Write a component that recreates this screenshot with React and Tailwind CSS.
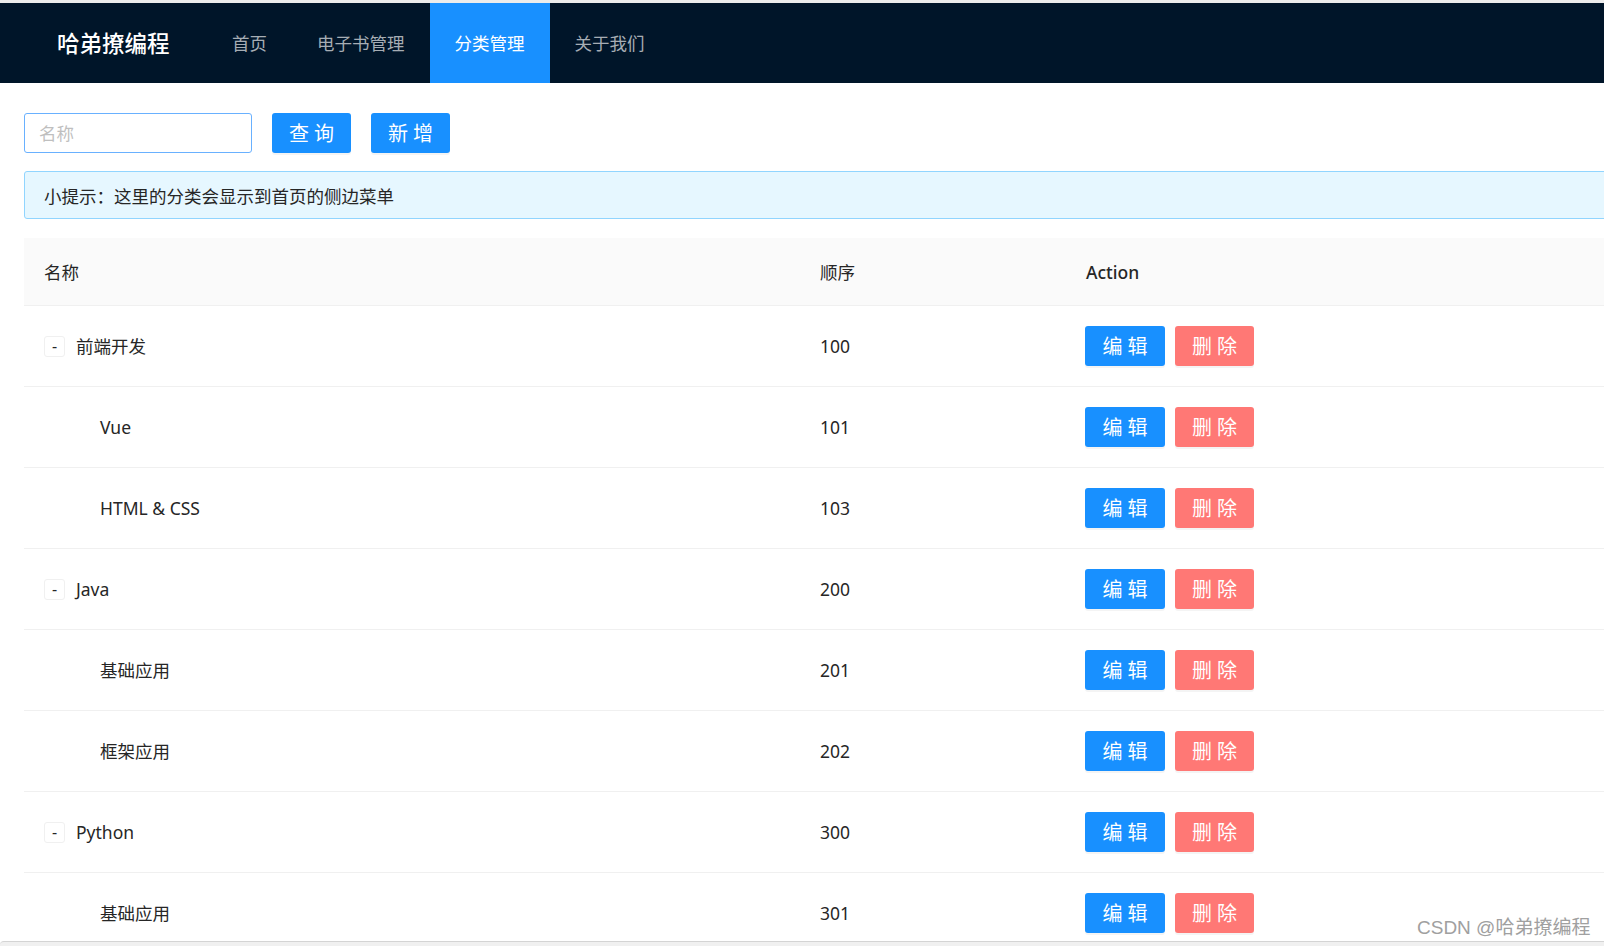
import React from "react";

const navItems = [
  { label: "首页" },
  { label: "电子书管理" },
  { label: "分类管理", active: true },
  { label: "关于我们" },
];

const rows = [
  { name: "前端开发", order: "100", parent: true },
  { name: "Vue", order: "101" },
  { name: "HTML & CSS", order: "103" },
  { name: "Java", order: "200", parent: true },
  { name: "基础应用", order: "201" },
  { name: "框架应用", order: "202" },
  { name: "Python", order: "300", parent: true },
  { name: "基础应用", order: "301" },
];

function TwoChar({ text }) {
  return (
    <span className="flex items-center justify-center gap-[5px] pt-[1px]">
      <span>{text[0]}</span>
      <span>{text[1]}</span>
    </span>
  );
}

export default function App() {
  return (
    <div
      className="w-[1604px] h-[946px] overflow-hidden bg-white flex flex-col relative text-[#262626]"
      style={{ fontFamily: '"Noto Sans", "Noto Sans CJK SC", sans-serif' }}
    >
      <div className="h-[3px] bg-[#ececec] shrink-0" />
      <header className="h-[80px] bg-[#001529] flex items-stretch shrink-0">
        <div className="ml-[57px] w-[150px] flex items-center pt-[2px] text-white text-[22.5px] font-medium leading-none">
          哈弟撩编程
        </div>
        <nav className="flex items-stretch">
          {navItems.map((n) => (
            <div
              key={n.label}
              className={
                n.active
                  ? "px-[25px] pt-[2px] flex items-center text-[17.5px] leading-none bg-[#1890ff] text-white"
                  : "px-[25px] pt-[2px] flex items-center text-[17.5px] leading-none text-[#a6adb4]"
              }
            >
              {n.label}
            </div>
          ))}
        </nav>
      </header>

      <main className="flex-1 overflow-hidden pl-[24px] pt-[30px]">
        <div className="flex items-center gap-[20px]">
          <input
            className="w-[228px] h-[40px] border border-[#69b1ff] rounded-[3px] px-[14px] text-[17.5px] outline-none placeholder:text-[#bfbfbf]"
            placeholder="名称"
          />
          <button className="w-[79px] h-[40px] bg-[#1890ff] text-white rounded-[3px] text-[20px] leading-none shadow-[0_2px_0_rgba(0,0,0,0.045)]">
            <TwoChar text="查询" />
          </button>
          <button className="w-[79px] h-[40px] bg-[#1890ff] text-white rounded-[3px] text-[20px] leading-none shadow-[0_2px_0_rgba(0,0,0,0.045)]">
            <TwoChar text="新增" />
          </button>
        </div>

        <div className="mt-[18px] w-[1620px] h-[48px] border border-[#91d5ff] bg-[#e6f7ff] rounded-[3px] pl-[19px] pt-[3px] flex items-center text-[17.5px] leading-none text-[#262626]">
          小提示：这里的分类会显示到首页的侧边菜单
        </div>

        <div className="mt-[19px] w-[1620px]">
          <div className="grid grid-cols-[776px_266px_1fr] h-[68px] pt-[2px] bg-[#fafafa] border-b border-[#f0f0f0] items-center text-[17.5px] leading-none">
            <div className="px-[20px]">名称</div>
            <div className="px-[20px]">顺序</div>
            <div className="px-[20px] font-medium">Action</div>
          </div>
          {rows.map((r, i) => (
            <div
              key={i}
              className="grid grid-cols-[776px_266px_1fr] h-[81px] border-b border-[#f0f0f0] items-center text-[17.5px] leading-none"
            >
              <div className="px-[20px] flex items-center">
                {r.parent ? (
                  <>
                    <span className="w-[21px] h-[21px] border border-[#f0f0f0] rounded-[3px] flex items-center justify-center text-[16px] leading-none mr-[11px] bg-white">
                      -
                    </span>
                    <span className="pt-[1px]">{r.name}</span>
                  </>
                ) : (
                  <span className="pl-[56px] pt-[1px]">{r.name}</span>
                )}
              </div>
              <div className="px-[20px] pt-[1px]">{r.order}</div>
              <div className="px-[19px] flex items-center gap-[10px]">
                <button className="w-[80px] h-[40px] bg-[#1890ff] text-white rounded-[3px] text-[20px] leading-none shadow-[0_2px_0_rgba(0,0,0,0.045)]">
                  <TwoChar text="编辑" />
                </button>
                <button className="w-[79px] h-[40px] bg-[#ff7875] text-white rounded-[3px] text-[20px] leading-none shadow-[0_2px_0_rgba(0,0,0,0.045)]">
                  <TwoChar text="删除" />
                </button>
              </div>
            </div>
          ))}
        </div>
      </main>

      <div className="h-[5px] shrink-0 border-t border-[#d4d4d4] bg-[#f0f0f0] rounded-tl-[4px]" />

      <div
        className="absolute left-[1417px] top-[918px] text-[19px] leading-none text-[#a0a0a0]"
        style={{ fontFamily: '"Liberation Sans", "Noto Sans CJK SC", sans-serif' }}
      >
        CSDN @哈弟撩编程
      </div>
    </div>
  );
}
